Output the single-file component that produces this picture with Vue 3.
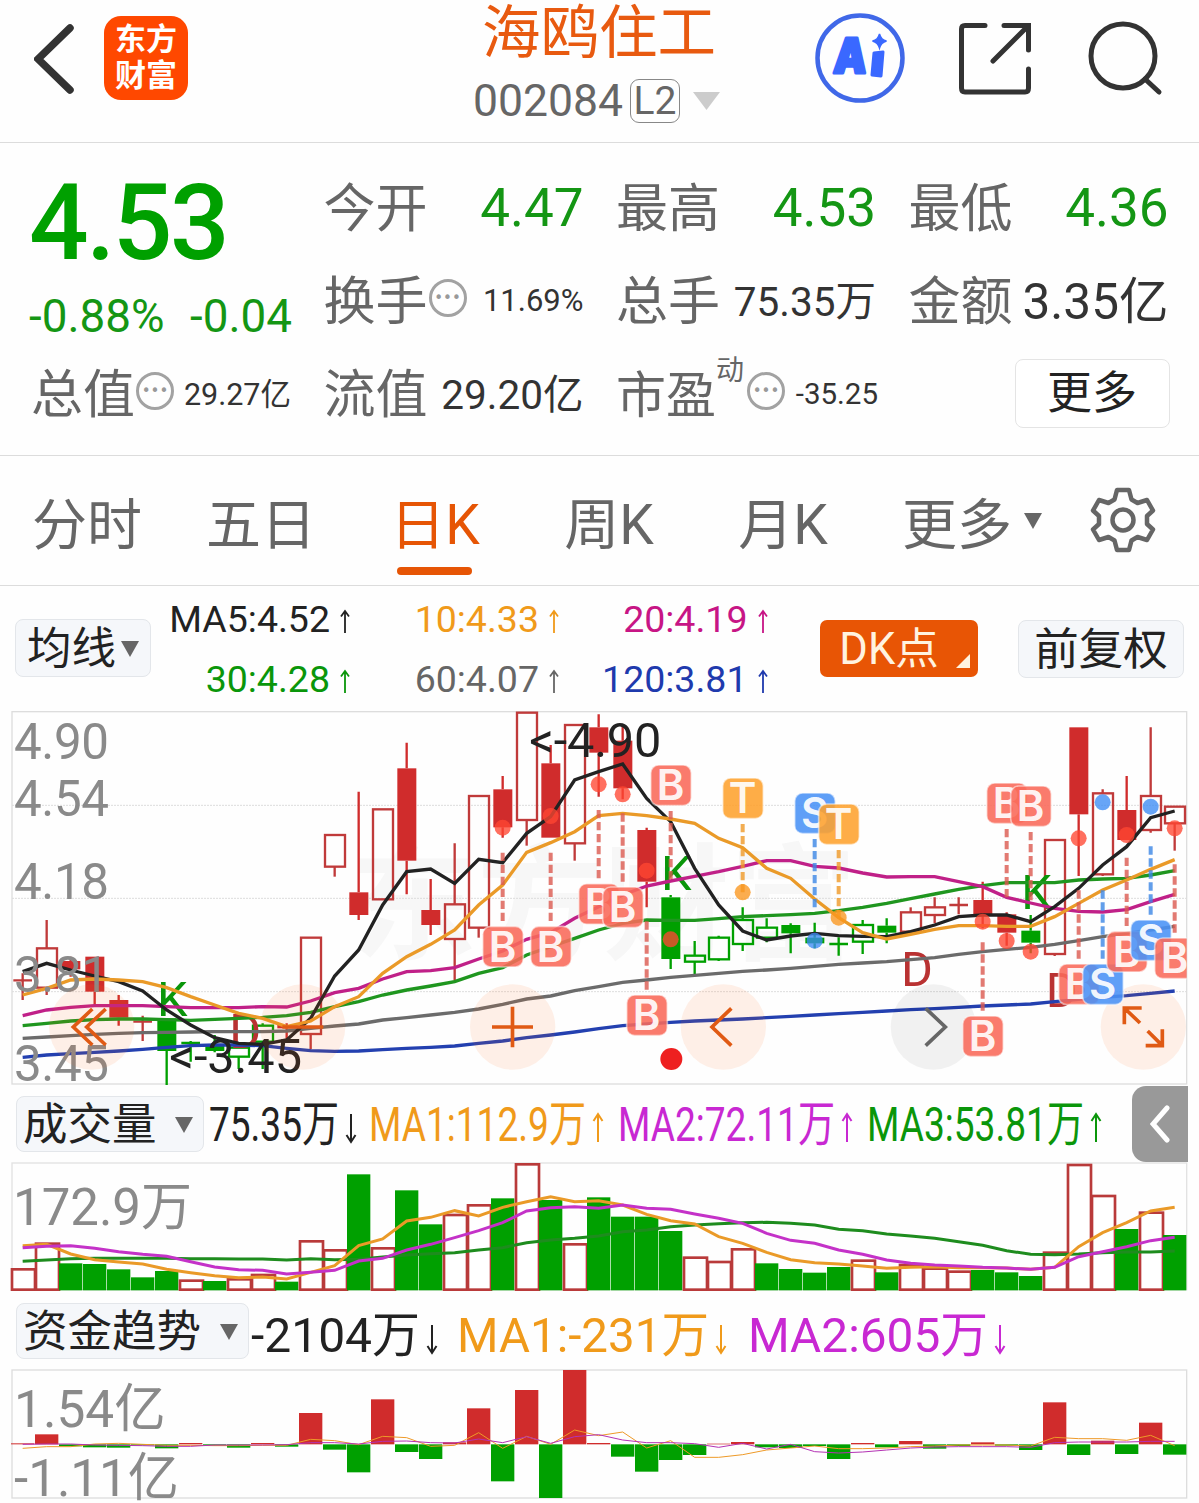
<script setup>
import { h } from 'vue'

// text squeezed or stretched to a fixed width, followed by a trend arrow
const FitText = (props) => h('svg', { width: props.item.w + 19, height: 60, style: { marginLeft: props.item.gap + 'px', flex: 'none', overflow: 'visible' } }, [
  h('text', { x: 0, y: 45, fill: props.item.color, 'font-size': 49, textLength: props.item.w, lengthAdjust: 'spacingAndGlyphs' }, props.item.text),
  h('path', {
    d: props.item.up ? 'M0 0V-28M-4.500 -21L0 -28L4.500 -21' : 'M0 0V-28M-4.500 -7L0 0L4.500 -7',
    transform: `translate(${props.item.w + 12} 46)`, fill: 'none', stroke: props.item.color, 'stroke-width': 2
  })
])
FitText.props = ['item']

const tabs = ['分时', '五日', '日K', '周K', '月K', '更多']

const legend = [
  { text: 'MA5:4.52', color: '#222' },
  { text: '10:4.33', color: '#f09a1a' },
  { text: '20:4.19', color: '#c71585' },
  { text: '30:4.28', color: '#0a960a' },
  { text: '60:4.07', color: '#666' },
  { text: '120:3.81', color: '#1f3aad' }
]

const volItems = [
  { text: '75.35万', w: 130, gap: 5, color: '#222', up: false },
  { text: 'MA1:112.9万', w: 217, gap: 11, color: '#f09a1a', up: true },
  { text: 'MA2:72.11万', w: 217, gap: 13, color: '#c828d2', up: true },
  { text: 'MA3:53.81万', w: 217, gap: 13, color: '#0a960a', up: true }
]
const fundItems = [
  { text: '-2104万', w: 169, gap: 2, color: '#222', up: false },
  { text: 'MA1:-231万', w: 252, gap: 18, color: '#f09a1a', up: false },
  { text: 'MA2:605万', w: 240, gap: 20, color: '#c828d2', up: false }
]

// plots are drawn in units of a third of a pixel
const cx = (i) => 68 + 72 * i
const line = (ys) => ys.map((y, i) => `${cx(i)},${y}`).join(' ')

// [kind, high, top, bottom, low]; r/g = filled, R/G = hollow, x/y = doji
const candles = [
  ['x', 805, 826, 826, 885], ['R', 645, 730, 848, 870], ['r', 755, 768, 793, 815], ['r', 755, 755, 860, 900],
  ['r', 870, 885, 938, 962], ['x', 932, 950, 950, 1008], ['g', 940, 940, 1038, 1140], ['y', 1008, 1014, 1014, 1070],
  ['g', 990, 1022, 1038, 1042], ['G', 1018, 1028, 1055, 1092], ['G', 955, 962, 1010, 1092], ['r', 955, 960, 970, 1010],
  ['R', 698, 698, 987, 1033], ['R', 390, 390, 485, 515], ['r', 260, 562, 630, 645], ['R', 313, 313, 583, 583],
  ['r', 113, 190, 467, 568], ['r', 522, 615, 660, 690], ['R', 415, 598, 702, 830], ['R', 273, 273, 668, 698],
  ['r', 213, 253, 367, 398], ['R', 23, 23, 345, 422], ['r', 120, 175, 398, 398], ['R', 60, 60, 415, 467],
  ['r', 28, 67, 143, 275], ['r', 60, 107, 250, 283], ['r', 368, 375, 530, 607], ['g', 570, 577, 762, 792],
  ['G', 708, 752, 770, 808], ['G', 692, 698, 763, 768], ['G', 607, 645, 717, 738], ['G', 640, 668, 698, 712],
  ['g', 655, 660, 685, 745], ['g', 653, 698, 715, 730], ['y', 697, 717, 717, 752], ['G', 645, 660, 710, 747],
  ['g', 640, 662, 683, 715], ['R', 607, 622, 680, 680], ['R', 577, 607, 630, 655], ['x', 577, 600, 600, 628],
  ['r', 530, 585, 628, 670], ['r', 622, 628, 683, 722], ['g', 630, 677, 713, 745], ['R', 405, 405, 747, 753],
  ['r', 67, 67, 328, 513], ['R', 253, 265, 508, 513], ['r', 213, 315, 405, 405], ['R', 67, 273, 375, 383],
  ['R', 305, 305, 355, 437]
].map(([k, hi, top, bottom, lo], i) => {
  const doji = k === 'x' || k === 'y'
  const green = 'gGy'.includes(k)
  return { x: cx(i), hi, top, bottom, lo, doji, hollow: k === 'R' || k === 'G', color: green ? '#00a000' : (k === 'r' ? '#d02c2c' : '#c03a3a') }
})

const priceLines = [
  { color: '#2340b0', ys: [1057, 1050, 1046, 1042, 1038, 1033, 1027, 1022, 1020, 1020, 1022, 1030, 1037, 1039, 1038, 1034, 1030, 1027, 1023, 1015, 1008, 998, 990, 981, 971, 962, 957, 952, 948, 945, 942, 938, 934, 930, 926, 922, 918, 914, 911, 907, 903, 900, 897, 890, 883, 877, 872, 865, 858] },
  { color: '#6b6b6b', ys: [1000, 996, 992, 988, 985, 983, 982, 981, 980, 980, 980, 978, 970, 963, 957, 945, 938, 930, 922, 912, 898, 882, 873, 857, 845, 832, 825, 817, 811, 805, 799, 795, 790, 784, 778, 774, 770, 764, 758, 748, 740, 733, 727, 718, 707, 695, 685, 675, 664] },
  { color: '#1f961f', ys: [962, 955, 948, 944, 942, 942, 944, 946, 943, 940, 937, 932, 922, 905, 890, 870, 855, 843, 830, 805, 788, 750, 725, 700, 675, 655, 645, 646, 646, 641, 635, 632, 629, 625, 617, 607, 595, 581, 567, 553, 542, 533, 533, 533, 525, 522, 520, 510, 497] },
  { color: '#c02088', ys: [932, 915, 907, 902, 902, 902, 905, 908, 908, 908, 905, 906, 888, 863, 850, 822, 800, 797, 788, 762, 738, 703, 683, 640, 605, 570, 543, 528, 514, 500, 484, 467, 467, 484, 489, 504, 516, 515, 515, 530, 545, 577, 594, 610, 619, 621, 614, 590, 568] },
  { color: '#222', ys: [800, 775, 795, 813, 830, 858, 915, 960, 998, 1015, 1018, 1005, 940, 813, 735, 600, 500, 492, 535, 463, 473, 385, 335, 225, 200, 177, 280, 350, 490, 600, 678, 705, 693, 685, 692, 694, 695, 680, 660, 635, 630, 630, 650, 605, 550, 480, 425, 338, 318] },
  { color: '#ea9a28', ys: [870, 850, 825, 822, 825, 830, 848, 875, 900, 925, 940, 965, 948, 905, 875, 805, 755, 718, 675, 600, 540, 442, 413, 380, 332, 325, 332, 342, 355, 400, 428, 490, 520, 582, 638, 683, 702, 688, 673, 662, 662, 664, 664, 635, 595, 555, 525, 493, 464] }
]

const tagColors = {
  B: { box: '#fa6a5a', dash: '#dc5a50', fill: '#ff4632' },
  S: { box: '#4a92f7', dash: '#3c87e6', fill: '#3c8cf5' },
  T: { box: '#ffa22e', dash: '#f09a28', fill: '#fa961e' }
}
// [candle index, letter, tag centre y, dot y]
const tags = [
  [20, 'B', 725, 368], [22, 'B', 725, 333], [24, 'B', 597, 238], [25, 'B', 607, 268], [26, 'B', 931, 497],
  [27, 'B', 241, 703], [30, 'T', 280, 562], [33, 'S', 325, 707], [34, 'T', 358, 638], [40, 'B', 994, 650],
  [41, 'B', 295, 708], [42, 'B', 304, 740], [44, 'B', 838, 400], [45, 'S', 838, 292], [46, 'B', 740, 390],
  [47, 'S', 706, 305], [48, 'B', 760, 370]
].map(([i, t, y, dot]) => ({ x: cx(i), t, y, dot, start: y < dot ? y + 77 : y - 282, ...tagColors[t] }))

const volTops = [550, 473, 535, 537, 553, 577, 558, 584, 588, 580, 567, 590, 466, 493, 268, 487, 316, 418, 387, 358, 340, 235, 345, 475, 337, 395, 395, 438, 515, 528, 490, 535, 552, 563, 546, 524, 562, 537, 548, 557, 555, 562, 573, 500, 237, 330, 432, 380, 450]
const volRed = [0, 1, 7, 9, 10, 12, 13, 15, 18, 19, 21, 23, 28, 29, 30, 35, 37, 38, 39, 43, 44, 45, 47]
const volumes = volTops.map((y, i) => ({ x: cx(i) - 35, y, red: volRed.includes(i) }))

const volLines = [
  { color: '#1e8c1e', ys: [529, 525, 521, 520, 520, 520, 520, 521, 521, 522, 522, 525, 521, 524, 523, 516, 510, 506, 503, 495, 488, 473, 465, 460, 453, 440, 435, 425, 420, 416, 413, 412, 415, 420, 433, 437, 447, 453, 460, 470, 481, 497, 508, 509, 507, 503, 501, 501, 498] },
  { color: '#ea9a28', ys: [482, 478, 507, 524, 531, 537, 553, 563, 572, 578, 576, 582, 562, 542, 482, 462, 408, 397, 377, 393, 367, 350, 335, 350, 347, 360, 388, 407, 417, 455, 475, 502, 524, 533, 537, 543, 550, 547, 545, 548, 548, 549, 553, 547, 485, 443, 413, 378, 367] },
  { color: '#c432c8', ys: [488, 484, 482, 490, 500, 508, 514, 530, 546, 554, 556, 567, 562, 556, 528, 520, 495, 478, 458, 437, 413, 378, 368, 365, 370, 360, 370, 373, 387, 400, 415, 445, 466, 475, 495, 508, 525, 535, 540, 543, 547, 549, 553, 547, 515, 500, 485, 467, 457] }
]

// values are bar ends, the zero line is at 463
const funds = [460, 433, 469, 472, 473, 466, 475, 459, 467, 473, 459, 470, 369, 479, 547, 328, 486, 507, 457, 355, 574, 300, 624, 240, 459, 500, 545, 510, 495, 461, 456, 472, 474, 468, 507, 459, 472, 453, 476, 468, 457, 467, 480, 337, 495, 452, 492, 398, 494]
  .map((y, i) => ({ x: cx(i) - 35, y: Math.min(y, 463), h: Math.abs(y - 463), color: y < 463 ? '#d02c2c' : '#00a000' }))

const fundLines = [
  { color: '#ee9a28', ys: [475, 470, 470, 462, 460, 463, 466, 466, 467, 467, 466, 466, 448, 452, 464, 439, 443, 469, 466, 428, 475, 439, 463, 420, 437, 426, 474, 452, 502, 502, 494, 480, 474, 468, 476, 476, 474, 470, 468, 465, 465, 465, 468, 442, 446, 446, 451, 436, 467] },
  { color: '#b432b4', ys: [463, 462, 462, 465, 466, 467, 469, 469, 465, 465, 465, 464, 458, 458, 462, 454, 453, 458, 459, 447, 458, 440, 460, 440, 434, 450, 458, 458, 461, 472, 460, 477, 463, 485, 489, 486, 480, 474, 471, 470, 470, 470, 472, 458, 456, 456, 456, 454, 454] }
]
</script>

<template>
  <div class="page">
    <header class="top">
      <svg class="back" width="40" height="70" viewBox="0 0 40 70"><path d="M36 4L4 35L36 66" /></svg>
      <div class="logo"><span>东方</span><span>财富</span></div>
      <div class="title">
        <h1>海鸥住工</h1>
        <div class="code">
          <span>002084</span><span class="level">L2</span>
          <svg width="27" height="18"><path d="M0 0H27L13.5 18Z" fill="#ccc" /></svg>
        </div>
      </div>
      <svg class="ai" width="90" height="90" viewBox="0 0 90 90">
        <circle cx="45" cy="45" r="42.5" fill="none" stroke="#4068e8" stroke-width="4.5" />
        <text x="18" y="60" transform="skewX(-4) translate(4 0)" textLength="33" lengthAdjust="spacingAndGlyphs">A</text>
        <path d="M59 40L68 39L66 63L57 62Z" fill="#3a68ff" stroke="#3a68ff" stroke-width="3" stroke-linejoin="round" />
        <path d="M64.500 21Q66 27 71.500 28Q66 29.500 64.500 35Q63 29.500 57.500 28Q63 27 64.500 21Z" fill="#3a68ff" stroke="#3a68ff" stroke-width="1.500" />
      </svg>
      <svg class="share" width="72" height="72" viewBox="0 0 72 72">
        <path d="M26 2.500H6Q2.500 2.500 2.500 6V65Q2.500 69 6 69H66Q69.500 69 69.500 65V46" />
        <path d="M45 2.500H69.500V27M69.500 2.500L34 38" />
      </svg>
      <svg class="search" width="75" height="75" viewBox="0 0 75 75">
        <circle cx="35" cy="35" r="32" /><path d="M57 58L71 71" />
      </svg>
    </header>

    <section class="quote">
      <div class="price">
        <strong>4.53</strong>
        <div class="change"><span>-0.88%</span><span>-0.04</span></div>
      </div>
      <div class="cell"><label>今开</label><b class="green big">4.47</b></div>
      <div class="cell"><label>最高</label><b class="green big">4.53</b></div>
      <div class="cell"><label>最低</label><b class="green big">4.36</b></div>
      <div class="cell"><label>换手</label><i class="info">•••</i><b class="small">11.69%</b></div>
      <div class="cell"><label>总手</label><b class="mid">75.35万</b></div>
      <div class="cell"><label>金额</label><b class="large">3.35亿</b></div>
      <div class="cell"><label>总值</label><i class="info">•••</i><b class="small cn">29.27亿</b></div>
      <div class="cell"><label>流值</label><b class="mid">29.20亿</b></div>
      <div class="cell"><label class="pe">市盈</label><sup>动</sup><i class="info">•••</i><b class="small neg">-35.25</b></div>
      <div class="cell end"><button class="more">更多</button></div>
    </section>

    <nav class="tabs">
      <div v-for="t in tabs" :key="t" class="tab" :class="{ active: t === '日K' }">
        {{ t }}
        <svg v-if="t === '更多'" class="caret" width="18" height="16"><path d="M0 0H18L9 16Z" fill="#666" /></svg>
      </div>
      <svg class="gear" width="68" height="68" viewBox="-34 -34 68 68">
        <path d="M-6 -30H6L8.500 -20.500L14.500 -17L24 -20L30 -9.500L24 -4V4L30 9.500L24 20L14.500 17L8.500 20.500L6 30H-6L-8.500 20.500L-14.500 17L-24 20L-30 9.500L-24 4V-4L-30 -9.500L-24 -20L-14.500 -17L-8.500 -20.500Z" />
        <circle r="10.500" />
      </svg>
    </nav>

    <section class="legend">
      <button class="pill avg">均线<svg width="18" height="16"><path d="M0 0H18L9 16Z" fill="#666" /></svg></button>
      <div class="mas">
        <span v-for="m in legend" :key="m.text" :style="{ color: m.color }">
          {{ m.text }}<svg width="12" height="24"><path d="M6 24V2M2 7.500L6 2L10 7.500" fill="none" :stroke="m.color" stroke-width="1.800" /></svg>
        </span>
      </div>
      <button class="dk">DK点</button>
      <button class="pill fq">前复权</button>
    </section>

    <svg class="plot" width="1199" height="385" viewBox="0 0 3597 1155">
      <defs>
        <clipPath id="frame"><rect x="36" y="20" width="3524" height="1120" /></clipPath>
      </defs>
      <text class="mark" x="1050" y="735" textLength="1520">东方财富</text>
      <rect x="36" y="20" width="3524" height="1117" fill="none" stroke="#ddd" stroke-width="4" />
      <path d="M36 301H3560M36 580H3560M36 860H3560" stroke="#ddd" stroke-width="3" stroke-dasharray="6 3" />

      <g v-for="c in candles" :key="c.x" :stroke="c.color">
        <path v-if="c.doji" :d="`M${c.x} ${c.hi}V${c.lo}M${c.x - 28} ${c.top}H${c.x + 28}`" stroke-width="7" />
        <template v-else>
          <path :d="`M${c.x} ${c.hi}V${c.top}M${c.x} ${c.bottom}V${c.lo}`" stroke-width="7" />
          <rect v-if="c.hollow" :x="c.x - 29" :y="c.top" width="60" :height="c.bottom - c.top" fill="none" stroke-width="7" />
          <rect v-else :x="c.x - 28" :y="c.top" width="57" :height="c.bottom - c.top" :fill="c.color" stroke="none" />
        </template>
      </g>

      <g class="letters">
        <text x="471" y="932" fill="#0a960a">K</text>
        <text x="1983" y="554" fill="#0a960a">K</text>
        <text x="3064" y="613" fill="#0a960a">K</text>
        <text x="688" y="1030" fill="#b93232">D</text>
        <text x="2703" y="842" fill="#b93232">D</text>
        <text x="3137" y="905" fill="#b93232">D</text>
      </g>

      <polyline v-for="l in priceLines" :key="l.color" :points="line(l.ys)" :stroke="l.color" fill="none" stroke-width="10" />

      <g class="axis">
        <text x="42" y="162" textLength="285">4.90</text>
        <text x="42" y="332" textLength="285">4.54</text>
        <text x="42" y="581" textLength="285">4.18</text>
        <text x="42" y="860" textLength="285">3.81</text>
        <text x="42" y="1128" textLength="285">3.45</text>
      </g>
      <g class="letters" fill="#222">
        <text x="508" y="1105" textLength="398">&lt;-3.45</text>
        <text x="1588" y="155" textLength="396">&lt;-4.90</text>
      </g>

      <g fill="#ff6a1e" fill-opacity="0.1">
        <circle cx="275" cy="966" r="128" /><circle cx="908" cy="966" r="128" />
        <circle cx="1538" cy="966" r="128" /><circle cx="2170" cy="966" r="128" />
        <circle cx="2800" cy="966" r="128" fill="#000" fill-opacity="0.05" /><circle cx="3430" cy="966" r="128" />
      </g>
      <g fill="none" stroke="#e05a14" stroke-width="11">
        <path d="M277 912L220 966L277 1020M317 912L260 966L317 1020" />
        <path d="M847 966H970" />
        <path d="M1476 966H1599M1537.500 905V1027" />
        <path d="M2194 910L2136 966L2194 1022" />
        <path d="M2777 910L2836 966L2777 1022" stroke="#666" />
        <path d="M3373 958V909H3425M3376 912L3420 954M3437 1022H3487V973M3443 978L3484 1019" />
      </g>

      <g clip-path="url(#frame)">
        <g v-for="t in tags" :key="t.x">
          <path :d="`M${t.x} ${t.start}V${t.start + 205}`" :stroke="t.dash" stroke-width="12" stroke-dasharray="25 11" opacity="0.8" />
          <circle :cx="t.x" :cy="t.dot" r="24" :fill="t.fill" opacity="0.78" />
          <rect :x="t.x - 60" :y="t.y - 61" width="122" height="122" rx="24" :fill="t.box" stroke="#fff" stroke-opacity="0.6" stroke-width="5" opacity="0.88" />
          <text class="tag" :x="t.x" :y="t.y + 45">{{ t.t }}</text>
        </g>
      </g>
      <circle cx="2014" cy="1062" r="33" fill="#ee2020" />
    </svg>

    <section class="ind">
      <button class="pill pick">成交量<svg width="18" height="16"><path d="M0 0H18L9 16Z" fill="#666" /></svg></button>
      <FitText v-for="v in volItems" :key="v.text" :item="v" />
      <div class="drawer"><svg width="20" height="38" viewBox="0 0 20 38"><path d="M17 3L3 19L17 35" /></svg></div>
    </section>

    <svg class="plot" width="1199" height="130" viewBox="0 231 3597 390">
      <rect x="36" y="234" width="3524" height="380" fill="none" stroke="#e2e2e2" stroke-width="4" />
      <template v-for="v in volumes" :key="v.x">
        <rect v-if="v.red" :x="v.x + 3" :y="v.y + 3" width="69" :height="611 - v.y" fill="#fff" stroke="#b93a3a" stroke-width="8" />
        <rect v-else :x="v.x" :y="v.y" width="70" :height="616 - v.y" fill="#00a000" />
      </template>
      <polyline v-for="l in volLines" :key="l.color" :points="line(l.ys)" :stroke="l.color" fill="none" stroke-width="9" />
      <text class="axis-cn" x="39" y="420" textLength="537" lengthAdjust="spacingAndGlyphs">172.9万</text>
    </svg>

    <section class="ind fund">
      <button class="pill pick wide">资金趋势<svg width="18" height="16"><path d="M0 0H18L9 16Z" fill="#666" /></svg></button>
      <FitText v-for="v in fundItems" :key="v.text" :item="v" />
    </section>

    <svg class="plot" width="1199" height="135" viewBox="0 234 3597 405">
      <rect x="36" y="240" width="3524" height="384" fill="none" stroke="#ddd" stroke-width="4" />
      <rect v-for="f in funds" :key="f.x" :x="f.x" :y="f.y" width="70" :height="f.h" :fill="f.color" />
      <polyline v-for="l in fundLines" :key="l.color" :points="line(l.ys)" :stroke="l.color" fill="none" stroke-width="3" />
      <text class="axis-cn" x="42" y="410" textLength="455" lengthAdjust="spacingAndGlyphs">1.54亿</text>
      <text class="axis-cn" x="42" y="617" textLength="495" lengthAdjust="spacingAndGlyphs">-1.11亿</text>
    </svg>
  </div>
</template>

<style>
body {
  margin: 0;
  background: #fefefe;
}
</style>

<style scoped>
.page {
  width: 1199px;
  height: 1503px;
  overflow: hidden;
  background: #fefefe;
  font-family: Roboto, "Noto Sans CJK SC", sans-serif;
  color: #333;
}

button {
  font-family: inherit;
  padding: 0;
  color: #222;
}

svg {
  display: block;
  flex: none;
}

.top {
  display: flex;
  align-items: flex-start;
  height: 142px;
  padding-left: 34px;
  border-bottom: 1px solid #dcdcdc;
}

.back {
  margin-top: 24px;
  fill: none;
  stroke: #333;
  stroke-width: 7.5;
  stroke-linecap: round;
}

.logo {
  display: flex;
  flex-direction: column;
  align-items: center;
  justify-content: center;
  width: 84px;
  height: 84px;
  margin: 16px 0 0 30px;
  border-radius: 17px;
  background: #ff4800;
  color: #fff;
  font-size: 31px;
  font-weight: 700;
  line-height: 36px;
}

.title {
  width: 247px;
  margin-left: 285px;
}

h1 {
  margin: 0;
  padding: 3px 0 0 9px;
  font-size: 58.5px;
  font-weight: 400;
  line-height: 60px;
  color: #e85a10;
  white-space: nowrap;
}

.code {
  display: flex;
  align-items: center;
  height: 44px;
  margin-top: 16px;
  font-size: 44.5px;
  color: #666;
}

.code svg {
  margin-left: 13px;
}

.level {
  box-sizing: border-box;
  width: 50px;
  height: 44px;
  margin-left: 7px;
  border: 1.5px solid #888;
  border-radius: 9px;
  font-size: 39px;
  line-height: 43px;
  text-align: center;
}

.ai {
  margin: 13px 0 0 95px;
}

.ai text {
  font-family: Inter, sans-serif;
  font-size: 48px;
  font-weight: 900;
  fill: #3a68ff;
  stroke: #3a68ff;
  stroke-width: 3;
  stroke-linejoin: round;
}

.share,
.search {
  fill: none;
  stroke: #333;
  stroke-width: 5;
  stroke-linecap: round;
}

.share {
  margin: 23px 0 0 54px;
}

.search {
  margin: 21px 0 0 57px;
}

.quote {
  display: grid;
  grid-template-columns: repeat(4, 260px);
  grid-auto-rows: 93px;
  column-gap: 32.5px;
  height: 294px;
  padding: 18px 0 0 31px;
  border-bottom: 1px solid #dcdcdc;
}

.price {
  grid-row: span 2;
  color: #00a000;
}

.price strong {
  display: block;
  margin-left: -2px;
  font-size: 105px;
  font-weight: 500;
  line-height: 126px;
  letter-spacing: -2.5px;
}

.change {
  display: flex;
  justify-content: space-between;
  width: 263px;
  margin-left: -2px;
  font-size: 45.8px;
  line-height: 60px;
  color: #149614;
}

.cell {
  display: flex;
  align-items: center;
  white-space: nowrap;
}

.cell label {
  margin-top: 4px;
  font-size: 52px;
  line-height: 60px;
  color: #666;
}

.cell .pe {
  font-size: 50px;
}

.cell b {
  margin-left: auto;
  font-weight: 400;
}

.cell .green {
  color: #149614;
}

.big {
  font-size: 53px;
}

.cell .large {
  margin-bottom: 6px;
  font-size: 49.5px;
}

.mid {
  margin-bottom: 5px;
  font-size: 40.5px;
}

.small {
  font-size: 31px;
}

.cn {
  margin-bottom: 4px;
  font-size: 30.5px;
}

.cell .neg {
  margin-right: -2px;
  font-size: 29.5px;
}

.info {
  display: flex;
  align-items: center;
  justify-content: center;
  box-sizing: border-box;
  width: 38px;
  height: 38px;
  margin: 0 0 6px 1px;
  border: 3px solid #a2a2a2;
  border-radius: 50%;
  color: #999;
  font: 15px "DejaVu Sans", sans-serif;
}

sup {
  margin: 0 2px 46px 0;
  font-size: 28px;
  line-height: 30px;
  color: #666;
}

.end {
  justify-content: flex-end;
}

.more {
  width: 155px;
  height: 69px;
  margin-right: -1px;
  border: 1.5px solid #e4e4e4;
  border-radius: 8px;
  background: #fff;
  font-size: 45px;
  line-height: 60px;
}

.tabs {
  display: flex;
  height: 129px;
  border-bottom: 1px solid #dcdcdc;
}

.tab {
  position: relative;
  width: 174px;
  font-size: 55px;
  line-height: 138px;
  height: 129px;
  text-align: center;
  color: #666;
}

.active {
  color: #e65505;
}

.active::after {
  content: '';
  position: absolute;
  left: 49px;
  bottom: 10px;
  width: 75px;
  height: 8px;
  border-radius: 4px;
  background: #e65505;
}

.caret {
  position: absolute;
  left: 154px;
  top: 57px;
}

.gear {
  margin: 30px 0 0 45px;
  fill: none;
  stroke: #666;
  stroke-width: 4.5;
  stroke-linejoin: round;
}

.legend {
  display: flex;
  height: 119px;
  padding-left: 15px;
}

.pill {
  box-sizing: border-box;
  display: flex;
  flex: none;
  align-items: center;
  height: 58px;
  border: 1.5px solid #e3e6ea;
  border-radius: 8px;
  background: #f5f7fa;
  font-size: 44.5px;
  line-height: 50px;
  padding-top: 1px;
}

.avg {
  width: 136px;
  margin-top: 33px;
  padding-left: 11px;
}

.avg svg {
  margin: 0 0 0 5px;
}

.mas {
  display: grid;
  grid-template-columns: 200px 209px 208.5px;
  grid-auto-rows: 60px;
  padding-top: 3px;
}

.mas span {
  display: flex;
  justify-content: flex-end;
  align-items: center;
  font-size: 37.5px;
  white-space: nowrap;
}

.mas svg {
  margin: 4px 0 0 9px;
}

.dk {
  position: relative;
  width: 158px;
  height: 57px;
  margin: 34px 0 0 51.5px;
  padding: 2px 20px 0 0;
  border: 0;
  border-radius: 7px;
  background: #e85505;
  color: #fff3e0;
  font-size: 43.5px;
  line-height: 50px;
}

.dk::after {
  content: '';
  position: absolute;
  right: 8px;
  bottom: 9px;
  border-left: 14px solid transparent;
  border-bottom: 14px solid #fff3e0;
}

.fq {
  justify-content: center;
  width: 166px;
  margin: 34px 0 0 40px;
}

.mark {
  font-size: 380px;
  font-weight: 700;
  fill: #f7f7f7;
}

.axis {
  font-size: 148px;
  fill: #8a8a8a;
}

.axis-cn {
  font-size: 156px;
  fill: #8a8a8a;
}

.letters {
  font-size: 146px;
}

.tag {
  font-family: Inter, sans-serif;
  font-size: 126px;
  font-weight: 600;
  text-anchor: middle;
  fill: #fff;
  fill-opacity: 0.92;
}

.ind {
  position: relative;
  display: flex;
  height: 66px;
  padding: 6px 0 0 16px;
}

.fund {
  height: 61px;
  padding-top: 15px;
}

.pick {
  justify-content: space-between;
  width: 188px;
  height: 56px;
  padding: 1px 10px 0 6px;
}

.fund .pick {
  margin-top: -4px;
}

.wide {
  width: 233px;
}

.drawer {
  position: absolute;
  left: 1132px;
  top: -4px;
  display: flex;
  align-items: center;
  justify-content: center;
  width: 56px;
  height: 76px;
  border-radius: 14px 0 0 14px;
  background: #999;
}

.drawer path {
  fill: none;
  stroke: #fff;
  stroke-width: 5;
  stroke-linecap: round;
}
</style>
